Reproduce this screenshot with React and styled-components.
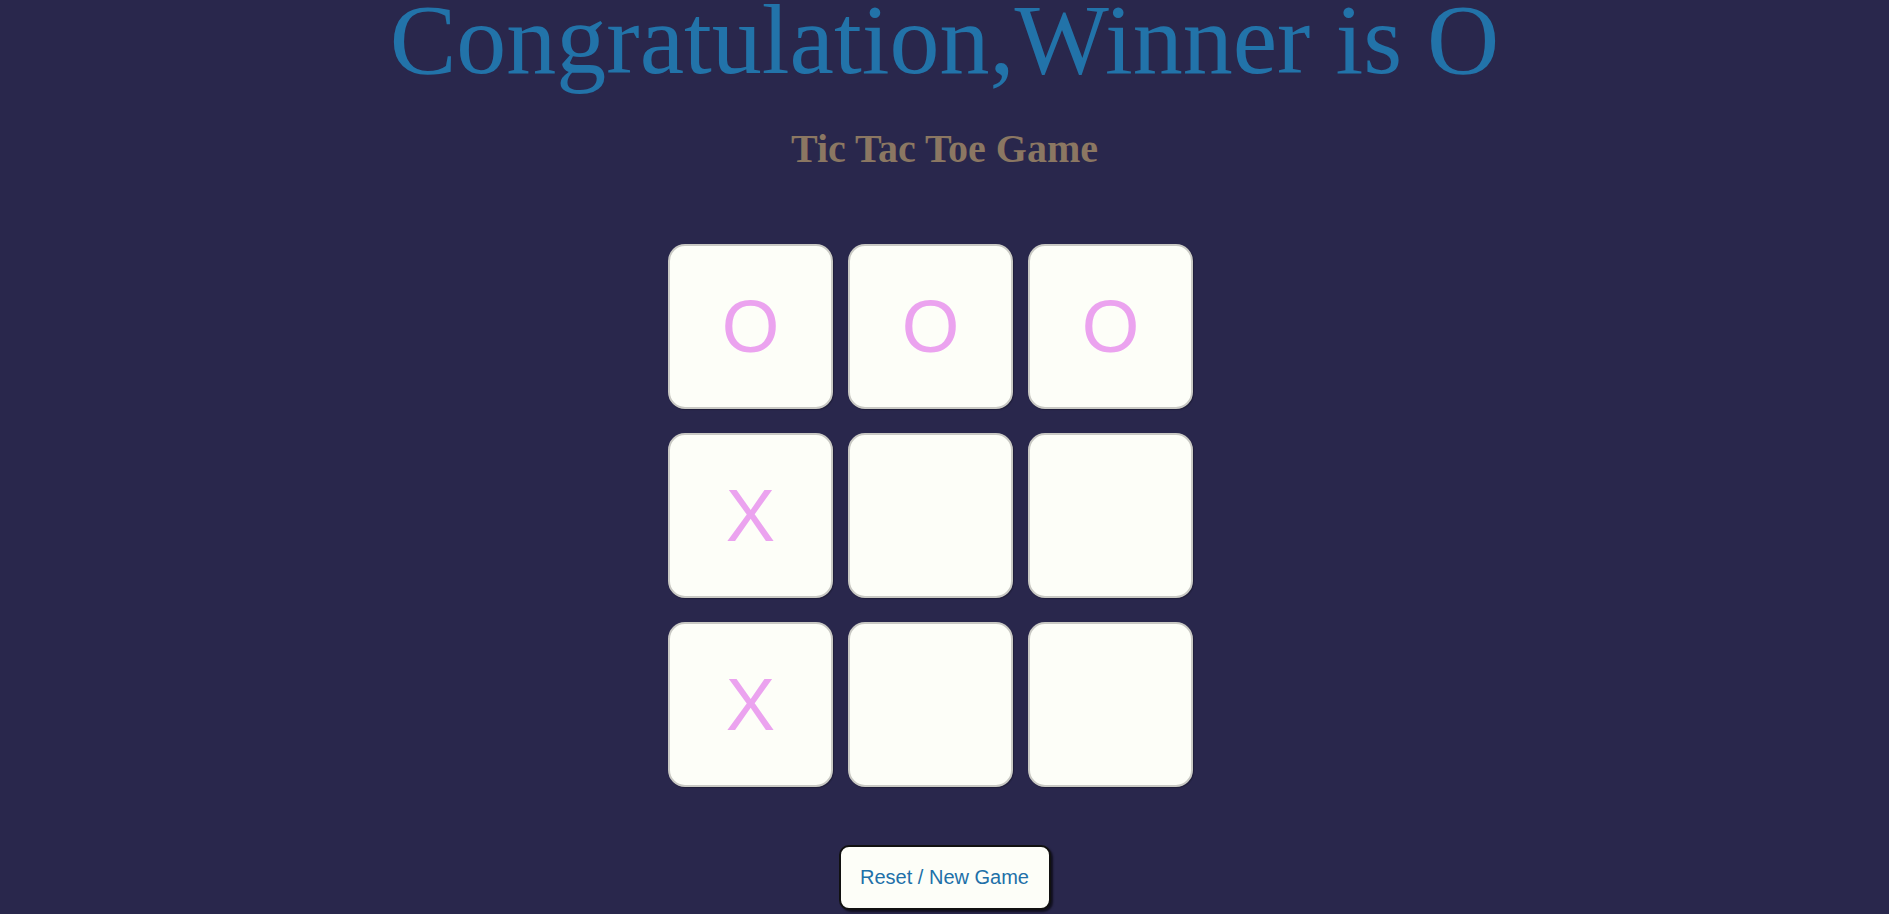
import styled, { createGlobalStyle } from "styled-components";

const board = ["O", "O", "O", "X", "", "", "X", "", ""];

export default function App() {
  return (
    <>
      <GlobalStyle />
      <Page>
        <Title>Congratulation,Winner is O</Title>
        <Subtitle>Tic Tac Toe Game</Subtitle>
        <Board>
          {board.map((mark, i) => (
            <Cell key={i}>{mark}</Cell>
          ))}
        </Board>
        <ResetButton>Reset / New Game</ResetButton>
      </Page>
    </>
  );
}

/* ============ Styles ============ */
const GlobalStyle = createGlobalStyle`
  html, body {
    margin: 0;
    padding: 0;
    background: #29274c;
  }
  body {
    font-family: "Liberation Serif", "Times New Roman", serif;
  }
`;
const Page = styled.div`
  min-height: 100vh;
  display: flex;
  flex-direction: column;
  align-items: center;
  background: #29274c;
  overflow: hidden;
`;
const Title = styled.h1`
  margin: 0;
  font-family: "Liberation Serif", "Times New Roman", serif;
  font-weight: 400;
  font-size: 100px;
  line-height: 80px;
  color: #2273a9;
  white-space: nowrap;
`;
const Subtitle = styled.h2`
  margin: 45px 0 0;
  font-family: "Liberation Serif", "Times New Roman", serif;
  font-weight: 700;
  font-size: 40px;
  color: #8b7762;
`;
const Board = styled.div`
  display: grid;
  grid-template-columns: repeat(3, 165px);
  grid-auto-rows: 165px;
  column-gap: 15px;
  row-gap: 24px;
  margin-top: 72px;
  padding-right: 28px;
`;
const Cell = styled.div`
  box-sizing: border-box;
  display: flex;
  align-items: center;
  justify-content: center;
  background: #fdfef8;
  border: 2px solid #c9c9c4;
  border-radius: 17px;
  box-shadow: 1px 1px 1px rgba(0, 0, 0, 0.25);
  font-family: "Liberation Sans", Arial, sans-serif;
  font-size: 74px;
  color: #eba3ef;
  cursor: pointer;
`;
const ResetButton = styled.button`
  box-sizing: border-box;
  margin-top: 58px;
  width: 212px;
  height: 65px;
  background: #fdfef8;
  border: 2px solid #111;
  border-radius: 10px;
  box-shadow: 2px 2px 2px rgba(0, 0, 0, 0.6);
  font-family: "Liberation Sans", Arial, sans-serif;
  font-size: 20px;
  color: #2170a8;
  cursor: pointer;
`;
